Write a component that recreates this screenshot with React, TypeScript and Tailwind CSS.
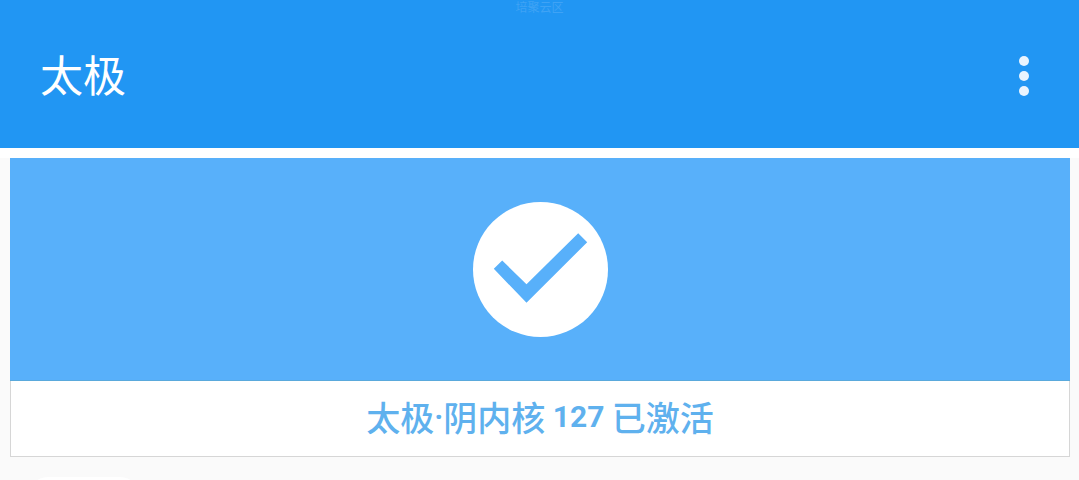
export default function App() {
  const cjk = "font-['Noto_Sans_CJK_SC','Noto_Sans',sans-serif]"
  const latin = "font-['Roboto',sans-serif] text-[30px] font-bold"

  return (
    <div className={`h-[480px] w-[1079px] overflow-hidden bg-[#fafafa] ${cjk}`}>
      <header className="h-[148px] bg-[#2196f3] flex flex-col">
        <div className="h-[13px] flex justify-center items-center text-[12px] leading-none text-[#3fa3f5]">
          培聚云区
        </div>
        <div className="flex justify-between items-center pl-[40px] pr-[50px] h-[135px]">
          <h1 className="text-[43px] leading-none text-white font-normal mb-[14px]">太极</h1>
          <div className="flex flex-col gap-[5px] mb-[10px]">
            <span className="w-[10px] h-[10px] rounded-full bg-[#e9f4fe]" />
            <span className="w-[10px] h-[10px] rounded-full bg-[#e9f4fe]" />
            <span className="w-[10px] h-[10px] rounded-full bg-[#e9f4fe]" />
          </div>
        </div>
      </header>
      <div className="h-[10px] bg-white" />
      <main className="mx-[10px] w-[1060px] h-[299px] border-x border-b border-[#d6d6d6] bg-white flex flex-col">
        <div className="-mx-px h-[223px] bg-[#58b0fa] border-b border-[#5aa9dc] flex justify-center items-center">
          <div className="w-[135px] h-[135px] rounded-full bg-white flex justify-center items-center">
            <svg width="135" height="135" viewBox="0 0 135 135" className="block">
              <polygon
                points="20.8,66.8 29.2,58.5 53.5,82.2 105.2,31.2 114.2,40.2 53.5,100.8"
                fill="#58b0fa"
              />
            </svg>
          </div>
        </div>
        <p className="flex-1 flex justify-center items-center pb-[4px] text-[34px] leading-none font-medium text-[#5fb1ee] whitespace-pre">
          太极<span className={latin}>·</span>阴内核<span className={latin}> 127 </span>已激活
        </p>
      </main>
      <div className="mt-5 ml-[28px] w-[112px] h-6 rounded-t-[20px] bg-white" />
    </div>
  )
}
